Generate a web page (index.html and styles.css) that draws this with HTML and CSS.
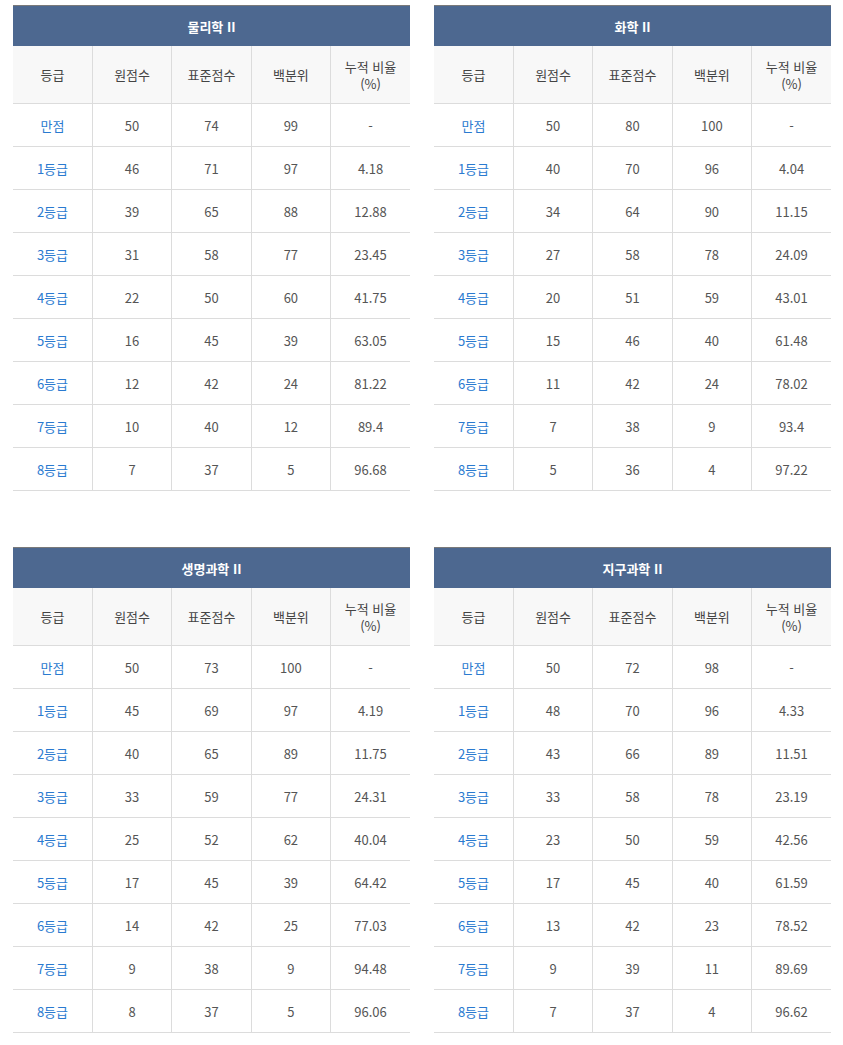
FILE: index.html
```html
<!DOCTYPE html>
<html lang="ko">
<head>
<meta charset="utf-8">
<link rel="stylesheet" href="styles.css">
</head>
<body>
<div class="grid">
  <section class="card">
    <div class="title">물리학 II</div>
    <table>
      <thead><tr><th>등급</th><th>원점수</th><th>표준점수</th><th>백분위</th><th>누적 비율<br>(%)</th></tr></thead>
      <tbody>
        <tr><td class="g">만점</td><td>50</td><td>74</td><td>99</td><td>-</td></tr>
        <tr><td class="g">1등급</td><td>46</td><td>71</td><td>97</td><td>4.18</td></tr>
        <tr><td class="g">2등급</td><td>39</td><td>65</td><td>88</td><td>12.88</td></tr>
        <tr><td class="g">3등급</td><td>31</td><td>58</td><td>77</td><td>23.45</td></tr>
        <tr><td class="g">4등급</td><td>22</td><td>50</td><td>60</td><td>41.75</td></tr>
        <tr><td class="g">5등급</td><td>16</td><td>45</td><td>39</td><td>63.05</td></tr>
        <tr><td class="g">6등급</td><td>12</td><td>42</td><td>24</td><td>81.22</td></tr>
        <tr><td class="g">7등급</td><td>10</td><td>40</td><td>12</td><td>89.4</td></tr>
        <tr><td class="g">8등급</td><td>7</td><td>37</td><td>5</td><td>96.68</td></tr>
      </tbody>
    </table>
  </section>
  <section class="card">
    <div class="title">화학 II</div>
    <table>
      <thead><tr><th>등급</th><th>원점수</th><th>표준점수</th><th>백분위</th><th>누적 비율<br>(%)</th></tr></thead>
      <tbody>
        <tr><td class="g">만점</td><td>50</td><td>80</td><td>100</td><td>-</td></tr>
        <tr><td class="g">1등급</td><td>40</td><td>70</td><td>96</td><td>4.04</td></tr>
        <tr><td class="g">2등급</td><td>34</td><td>64</td><td>90</td><td>11.15</td></tr>
        <tr><td class="g">3등급</td><td>27</td><td>58</td><td>78</td><td>24.09</td></tr>
        <tr><td class="g">4등급</td><td>20</td><td>51</td><td>59</td><td>43.01</td></tr>
        <tr><td class="g">5등급</td><td>15</td><td>46</td><td>40</td><td>61.48</td></tr>
        <tr><td class="g">6등급</td><td>11</td><td>42</td><td>24</td><td>78.02</td></tr>
        <tr><td class="g">7등급</td><td>7</td><td>38</td><td>9</td><td>93.4</td></tr>
        <tr><td class="g">8등급</td><td>5</td><td>36</td><td>4</td><td>97.22</td></tr>
      </tbody>
    </table>
  </section>
  <section class="card">
    <div class="title">생명과학 II</div>
    <table>
      <thead><tr><th>등급</th><th>원점수</th><th>표준점수</th><th>백분위</th><th>누적 비율<br>(%)</th></tr></thead>
      <tbody>
        <tr><td class="g">만점</td><td>50</td><td>73</td><td>100</td><td>-</td></tr>
        <tr><td class="g">1등급</td><td>45</td><td>69</td><td>97</td><td>4.19</td></tr>
        <tr><td class="g">2등급</td><td>40</td><td>65</td><td>89</td><td>11.75</td></tr>
        <tr><td class="g">3등급</td><td>33</td><td>59</td><td>77</td><td>24.31</td></tr>
        <tr><td class="g">4등급</td><td>25</td><td>52</td><td>62</td><td>40.04</td></tr>
        <tr><td class="g">5등급</td><td>17</td><td>45</td><td>39</td><td>64.42</td></tr>
        <tr><td class="g">6등급</td><td>14</td><td>42</td><td>25</td><td>77.03</td></tr>
        <tr><td class="g">7등급</td><td>9</td><td>38</td><td>9</td><td>94.48</td></tr>
        <tr><td class="g">8등급</td><td>8</td><td>37</td><td>5</td><td>96.06</td></tr>
      </tbody>
    </table>
  </section>
  <section class="card">
    <div class="title">지구과학 II</div>
    <table>
      <thead><tr><th>등급</th><th>원점수</th><th>표준점수</th><th>백분위</th><th>누적 비율<br>(%)</th></tr></thead>
      <tbody>
        <tr><td class="g">만점</td><td>50</td><td>72</td><td>98</td><td>-</td></tr>
        <tr><td class="g">1등급</td><td>48</td><td>70</td><td>96</td><td>4.33</td></tr>
        <tr><td class="g">2등급</td><td>43</td><td>66</td><td>89</td><td>11.51</td></tr>
        <tr><td class="g">3등급</td><td>33</td><td>58</td><td>78</td><td>23.19</td></tr>
        <tr><td class="g">4등급</td><td>23</td><td>50</td><td>59</td><td>42.56</td></tr>
        <tr><td class="g">5등급</td><td>17</td><td>45</td><td>40</td><td>61.59</td></tr>
        <tr><td class="g">6등급</td><td>13</td><td>42</td><td>23</td><td>78.52</td></tr>
        <tr><td class="g">7등급</td><td>9</td><td>39</td><td>11</td><td>89.69</td></tr>
        <tr><td class="g">8등급</td><td>7</td><td>37</td><td>4</td><td>96.62</td></tr>
      </tbody>
    </table>
  </section>
</div>
</body>
</html>
```
FILE: styles.css
```css
html, body {
  margin: 0;
  padding: 0;
  background: #fff;
}
body {
  font-family: "Noto Sans CJK KR", "Liberation Sans", sans-serif;
  font-size: 13px;
  color: #555;
}
.grid {
  display: grid;
  grid-template-columns: 397px 397px;
  column-gap: 24px;
  row-gap: 56px;
  padding: 5px 12px 0 13px;
}
.title {
  height: 40px;
  border-top: 1px solid #7a7a7a;
  background: #4d6890;
  color: #fff;
  font-weight: bold;
  font-size: 13px;
  display: flex;
  align-items: center;
  justify-content: center;
}
table {
  width: 397px;
  border-collapse: collapse;
  table-layout: fixed;
}
th, td {
  text-align: center;
  vertical-align: middle;
  border-bottom: 1px solid #dcdcdc;
  border-left: 1px solid #dcdcdc;
  padding: 0;
}
th:first-child, td:first-child {
  border-left: none;
}
th {
  height: 57px;
  background: #f8f8f8;
  font-weight: normal;
  color: #444;
  line-height: 17px;
}
td {
  height: 42px;
  color: #555;
}
td.g {
  color: #2a7ad0;
}
```
